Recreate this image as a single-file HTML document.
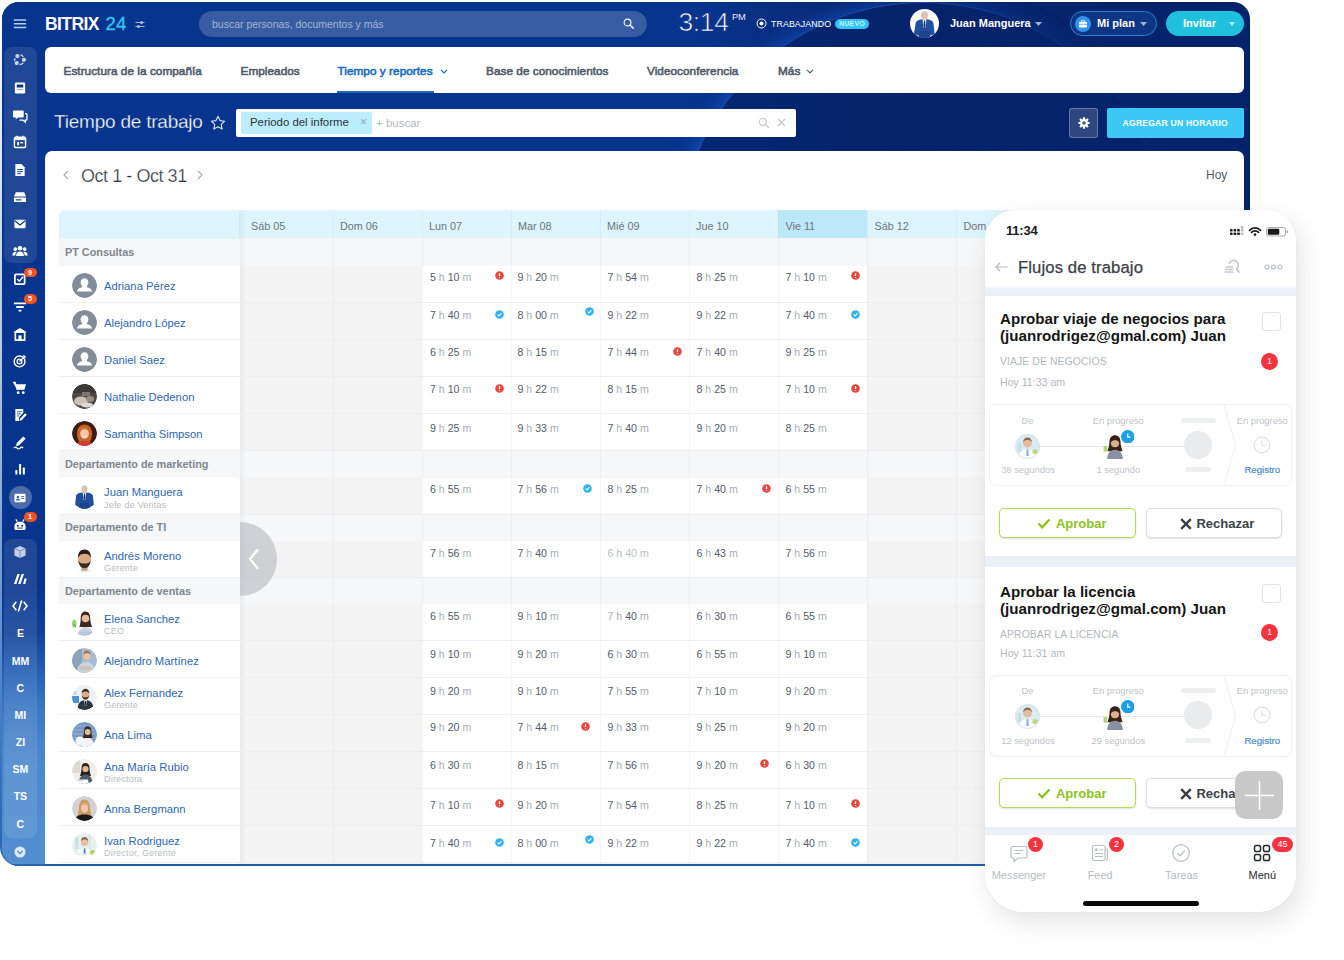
<!DOCTYPE html>
<html lang="es">
<head>
<meta charset="utf-8">
<title>Bitrix24 - Tiempo de trabajo</title>
<style>
*{box-sizing:border-box;margin:0;padding:0}
html,body{width:1344px;height:960px;background:#fff;overflow:hidden;font-family:"Liberation Sans",sans-serif;}
.abs{position:absolute}
#edge{position:absolute;left:0;top:0;width:80px;height:866px;border-radius:19px 0 0 19px;background:linear-gradient(180deg,#fff 0,#f2f6fb 60px,#e6eef8 110px,#a8c0e0 400px,#5a8bc8 650px,#2f6db8 800px,#2a66b5 866px)}
#win{position:absolute;left:0;top:0;width:1250px;height:866px;clip-path:inset(2px 0 0 2px round 17px 17px 0 17px);overflow:hidden;
 background:linear-gradient(90deg,#07348c 0%,#07348c 56%,#06266f 71%,#05236a 100%);}
#win .arcw{position:absolute;left:617.5px;top:-58.1px;width:640px;height:620px;-webkit-mask-image:linear-gradient(90deg,#000 0%,#000 42%,rgba(0,0,0,.12) 75%,rgba(0,0,0,.1) 100%);mask-image:linear-gradient(90deg,#000 0%,#000 42%,rgba(0,0,0,.12) 75%,rgba(0,0,0,.1) 100%)}
#win .arc{position:absolute;left:60px;top:60px;width:490px;height:490px;border-radius:50%;border:1.5px solid rgba(50,120,235,.5);background:rgba(6,34,106,.72);box-shadow:-3px -2px 20px rgba(30,100,225,.5)}
/* sidebar */
#side{position:absolute;left:2px;top:0;width:43px;height:866px;background:linear-gradient(180deg,#07348c 0%,#07348c 68%,#0f4097 73%,#1d54aa 76%,#2d69bb 79.5%,#3d79c4 82.5%,#4783ca 85.7%,#4d89cd 89%,#528ed0 100%);padding-left:3px;border-bottom:2px solid #2a66b5}
#side .grp{position:absolute;left:2px;width:33px;border-radius:8px;background:rgba(255,255,255,.10)}
#side .ic{position:absolute;left:8.4px;width:20px;height:20px;transform:scale(.93)}
#side .tx{position:absolute;left:0.4px;width:36px;text-align:center;color:#fff;font-weight:bold;font-size:10.5px;line-height:12px}
#side .bdg{position:absolute;left:21.7px;width:13px;height:9.6px;border-radius:4.8px;background:#f4511e;color:#fff;font-size:7.5px;font-weight:bold;text-align:center;line-height:9.8px}
/* top bar */
#top{position:absolute;left:0;top:0;width:1250px;height:47px;color:#fff}
.nav{position:absolute;left:45px;top:47px;width:1199px;height:46px;background:#fff;border-radius:6px}
.nav span{position:absolute;top:16.5px;font-size:11.75px;-webkit-text-stroke:.6px;letter-spacing:.05px;color:#525c69;white-space:nowrap;line-height:14px}
.card{position:absolute;left:45px;top:151px;width:1199px;height:720px;background:#fff;border-radius:7px 7px 0 0}
/* table */
.hd{position:absolute;top:210px;height:28.5px;background:#dff5fd}
.hd span,.hl{position:absolute;top:220px;font-size:10.8px;color:#6b7480;line-height:13px;white-space:nowrap}
.gr{position:absolute;left:59px;width:181px;height:26.4px;background:#f5f7f8;font-size:10.85px;font-weight:bold;color:#80868e;padding:6.7px 0 0 6px;line-height:13px;white-space:nowrap}
.pr{position:absolute;left:59px;width:181px;height:37px;background:#fff;border-bottom:1px solid #eef0f2}
.pr .av{position:absolute;left:12.5px;top:6.9px;width:25px;height:25px;border-radius:50%;overflow:hidden}
.pr .nm{position:absolute;left:45px;font-size:11.3px;color:#2f67b3;line-height:13px;white-space:nowrap}
.pr .sb{position:absolute;left:45px;top:22px;font-size:9px;color:#b9bdc2;line-height:10px;white-space:nowrap;letter-spacing:.2px}
.tc{position:absolute;font-size:10.6px;color:#535c69;line-height:12px;white-space:nowrap;word-spacing:0px}
.tc i{font-style:normal;color:#a8adb4}
.tc.f,.tc.f i{color:#b9bec4}
.er,.ok{position:absolute;width:8px;height:8px;border-radius:50%}
.er{background:#e5483f}
.ok{background:#2fb4ee}
/* phone */
#ph{position:absolute;left:985.4px;top:210.4px;width:310.5px;height:701.5px;border-radius:30px 30px 38px 38px;background:#fff;box-shadow:5px 10px 26px rgba(0,0,0,.11),0 0 3px rgba(0,0,0,.04);overflow:hidden}
#ph .band{position:absolute;left:0;width:311px;background:#ebf1f6}
#ph .ttl{position:absolute;left:14.6px;font-size:15.15px;font-weight:bold;color:#151515;line-height:17px;white-space:nowrap}
#ph .cap{position:absolute;left:14.6px;font-size:9.5px;color:#b3b8bd;line-height:12px;white-space:nowrap}
#ph .chk{position:absolute;left:276.3px;width:19px;height:19px;border:1px solid #dfe3e6;border-radius:3px;background:#fff}
#ph .rb{position:absolute;left:275.7px;width:17px;height:17px;border-radius:50%;background:#f5333f;color:#fff;font-size:8.5px;text-align:center;line-height:17px}
#ph .pbox{position:absolute;left:3.6px;width:303px;height:82px;border:1px solid #eff1f3;border-radius:7px}
#ph .sm{position:absolute;font-size:9.4px;color:#c0c4c9;line-height:10px;white-space:nowrap;text-align:center;transform:translateX(-50%)}
#ph .btn{position:absolute;height:30px;border-radius:5px;font-size:12.5px;font-weight:bold;line-height:28px;text-align:center;background:#fff;box-shadow:0 1px 2px rgba(0,0,0,.12)}
#ph .tab{position:absolute;font-size:11px;color:#b7bcc1;line-height:12px;transform:translateX(-50%);white-space:nowrap}
#ph .tb{position:absolute;height:14.5px;border-radius:7.5px;background:#f5333f;color:#fff;font-size:9px;text-align:center;line-height:14.5px}
</style>
</head>
<body>
<div id="edge"></div>
<div id="win">
<div class="arcw"><div class="arc"></div></div>
<div id="side">
<div class="grp" style="top:47px;height:216px"></div>
<div class="grp" style="top:539px;height:299px"></div>
<svg class="ic" style="top:50.4px;opacity:1" viewBox="0 0 20 20"><g fill="#c9d3ea"><circle cx="7.200" cy="5.800" r="2.300"/><circle cx="14.200" cy="9.800" r="2.300"/><circle cx="6.500" cy="13.300" r="2.300"/></g><path d="M10.500 4.300a6 6 0 0 1 3 2.400M13.500 13a6 6 0 0 1-4 2M4.300 11a6 6 0 0 1 .3-3" fill="none" stroke="#c9d3ea" stroke-width="1.500"/></svg>
<svg class="ic" style="top:77.5px;opacity:1" viewBox="0 0 20 20"><rect x="4.500" y="4" width="11" height="12" rx="1.500" fill="#fff"/><rect x="6.500" y="6.300" width="7" height="3.200" fill="#07348c"/><rect x="6.500" y="11" width="7" height="1" fill="#07348c" opacity=".5"/></svg>
<svg class="ic" style="top:105.5px;opacity:1" viewBox="0 0 20 20"><path d="M3.500 4h9.500a1 1 0 0 1 1 1v5.500a1 1 0 0 1-1 1H8l-2.500 2v-2H3.500a1 1 0 0 1-1-1V5a1 1 0 0 1 1-1z" fill="#fff"/><path d="M15.500 7.500h1a1 1 0 0 1 1 1v5a1 1 0 0 1-1 1h-.8v2l-2.400-2H9.500" fill="none" stroke="#fff" stroke-width="1.400"/></svg>
<svg class="ic" style="top:132px;opacity:1" viewBox="0 0 20 20"><rect x="4" y="5" width="12" height="11" rx="1.300" fill="none" stroke="#fff" stroke-width="1.600"/><rect x="4" y="5" width="12" height="3" fill="#fff"/><path d="M7 3.300v2.500M13 3.300v2.500" stroke="#fff" stroke-width="1.500"/><rect x="7" y="10" width="2" height="3.500" fill="#fff"/><rect x="10.300" y="10" width="3" height="1.500" fill="#fff"/></svg>
<svg class="ic" style="top:159.5px;opacity:1" viewBox="0 0 20 20"><path d="M5 3.500h6.500l3.500 3.500v9.500H5z" fill="#fff"/><path d="M7 9.500h6M7 11.800h6M7 14h4" stroke="#07348c" stroke-width="1"/></svg>
<svg class="ic" style="top:187px;opacity:1" viewBox="0 0 20 20"><path d="M5.500 5h9l2 4.500h-13z" fill="#fff"/><rect x="3.500" y="10.500" width="13" height="5" rx="1" fill="#fff"/><rect x="5.500" y="12.500" width="6" height="1.200" fill="#07348c"/></svg>
<svg class="ic" style="top:214px;opacity:1" viewBox="0 0 20 20"><rect x="4" y="5.500" width="12" height="9" rx="1.200" fill="#fff"/><path d="M4.500 6.500l5.500 4.500 5.500-4.500" fill="none" stroke="#07348c" stroke-width="1.300"/></svg>
<svg class="ic" style="top:241px;opacity:1" viewBox="0 0 20 20"><circle cx="10" cy="7" r="2.500" fill="#fff"/><path d="M5.800 15.500c0-3 1.700-5 4.200-5s4.200 2 4.200 5z" fill="#fff"/><circle cx="5" cy="8" r="1.900" fill="#fff"/><path d="M1.800 14.800c0-2.500 1.200-4 3.200-4 .6 0 1.100.1 1.500.4-1 1-1.500 2.200-1.600 3.600z" fill="#fff"/><circle cx="15" cy="8" r="1.900" fill="#fff"/><path d="M18.200 14.800c0-2.500-1.200-4-3.200-4-.6 0-1.100.1-1.500.4 1 1 1.500 2.200 1.600 3.600z" fill="#fff"/></svg>
<svg class="ic" style="top:268.8px;opacity:1" viewBox="0 0 20 20"><rect x="4.500" y="5" width="10.500" height="10.500" rx="1.300" fill="none" stroke="#fff" stroke-width="1.900"/><path d="M7 10l2.300 2.300 4-4.600" fill="none" stroke="#fff" stroke-width="1.600"/></svg>
<svg class="ic" style="top:297.3px;opacity:1" viewBox="0 0 20 20"><path d="M3.500 6h13M6 10h8M8.500 14h3" stroke="#fff" stroke-width="1.900"/></svg>
<svg class="ic" style="top:324px;opacity:1" viewBox="0 0 20 20"><path d="M10 3.500l6.500 4v1.500h-13V7.500z" fill="#fff"/><path d="M5 9v7.500h10V9" fill="none" stroke="#fff" stroke-width="1.800"/><rect x="8.300" y="11.500" width="3.400" height="5" fill="#fff"/></svg>
<svg class="ic" style="top:351px;opacity:1" viewBox="0 0 20 20"><circle cx="9.500" cy="10.500" r="5.800" fill="none" stroke="#fff" stroke-width="1.500"/><circle cx="9.500" cy="10.500" r="2.600" fill="none" stroke="#fff" stroke-width="1.400"/><path d="M9.500 10.500l6-6" stroke="#fff" stroke-width="1.500"/><path d="M14 3.500l.5 2 2 .5" fill="none" stroke="#fff" stroke-width="1.100"/></svg>
<svg class="ic" style="top:377.5px;opacity:1" viewBox="0 0 20 20"><path d="M2.500 4h2.300l.7 2h11l-1.800 6H7z" fill="#fff"/><path d="M2.500 4h2.300l2.200 8" fill="none" stroke="#fff" stroke-width="1.300"/><circle cx="8" cy="15" r="1.500" fill="#fff"/><circle cx="13.500" cy="15" r="1.500" fill="#fff"/></svg>
<svg class="ic" style="top:404.7px;opacity:1" viewBox="0 0 20 20"><path d="M5 3.500h8.500v4l-4.500 5v4H5z" fill="#fff"/><path d="M6.800 6.500h5M6.800 8.800h4M6.800 11h2" stroke="#07348c" stroke-width=".9"/><path d="M15.500 8l1.800 1.600-5.500 6-2.300.8.500-2.400z" fill="#fff"/></svg>
<svg class="ic" style="top:432px;opacity:1" viewBox="0 0 20 20"><path d="M13.500 4l2.500 2.500-7 7-3.300 1 .8-3.500z" fill="#fff"/><path d="M3.500 16.500c1.200-1.200 2.200-1.200 3.300 0s2.200 1.200 3.300 0 2.200-1.200 3.300 0" fill="none" stroke="#fff" stroke-width="1.300"/></svg>
<svg class="ic" style="top:459.4px;opacity:1" viewBox="0 0 20 20"><rect x="5" y="11" width="2.200" height="5" rx=".6" fill="#fff"/><rect x="9" y="4.500" width="2.200" height="11.500" rx=".6" fill="#fff"/><rect x="13" y="8.500" width="2.200" height="7.500" rx=".6" fill="#fff"/></svg>
<div class="abs" style="left:7px;top:486px;width:23px;height:23px;border-radius:50%;background:rgba(255,255,255,.28)"></div>
<svg class="ic" style="top:487.5px;opacity:1" viewBox="0 0 20 20"><rect x="4" y="5.500" width="12" height="9" rx="1.200" fill="#fff"/><circle cx="7.800" cy="9" r="1.400" fill="#3c5fae"/><path d="M5.600 12.800c0-1.300.9-2 2.200-2s2.200.7 2.200 2z" fill="#3c5fae"/><path d="M11.300 8.500h3.200M11.300 10.500h3.200" stroke="#3c5fae" stroke-width="1"/></svg>
<svg class="ic" style="top:514.5px;opacity:1" viewBox="0 0 20 20"><path d="M4 11.500c0-3 2.500-5 6-5s6 2 6 5v2.500a1.500 1.500 0 0 1-1.500 1.500h-9A1.500 1.500 0 0 1 4 14z" fill="#fff"/><circle cx="7.600" cy="10.800" r="1.100" fill="#07348c"/><circle cx="12.400" cy="10.800" r="1.100" fill="#07348c"/><path d="M7 13.300h6" stroke="#07348c" stroke-width="1"/><path d="M5.500 4l1.700 2.500M14.500 4l-1.700 2.500" stroke="#fff" stroke-width="1.300"/></svg>
<svg class="ic" style="top:542px;opacity:1" viewBox="0 0 20 20"><path d="M10 3.500l6 2.700v7.600l-6 2.700-6-2.700V6.200z" fill="#c4cfe8"/><path d="M4 6.200l6 2.700 6-2.700M10 8.900v7.600" fill="none" stroke="#5b77b8" stroke-width=".8"/></svg>
<svg class="ic" style="top:569px;opacity:1" viewBox="0 0 20 20"><path d="M3.500 15.500l3.700-11h2.600l-3.700 11zM8 15.500l3.700-11h2.600l-3.700 11zM13.300 15.500l1.500-6h2.400l-1.500 6z" fill="#fff"/></svg>
<svg class="ic" style="top:596px;opacity:1" viewBox="0 0 20 20"><path d="M6 5.500L2.500 10 6 14.500M14 5.500l3.500 4.500-3.500 4.500" fill="none" stroke="#fff" stroke-width="1.700"/><path d="M11.800 4l-3.600 12" stroke="#fff" stroke-width="1.700"/></svg>
<div class="tx" style="top:627px">E</div>
<div class="tx" style="top:654.6px">MM</div>
<div class="tx" style="top:682px">C</div>
<div class="tx" style="top:709px">MI</div>
<div class="tx" style="top:736px">ZI</div>
<div class="tx" style="top:763px">SM</div>
<div class="tx" style="top:790px">TS</div>
<div class="tx" style="top:817.7px">C</div>
<svg class="ic" style="top:841.5px;opacity:1" viewBox="0 0 20 20"><circle cx="10" cy="10" r="6" fill="#dce8f7"/><path d="M7.300 9l2.700 2.700L12.700 9" fill="none" stroke="#4f8fd0" stroke-width="1.500"/></svg>
<div class="bdg" style="top:267.5px">9</div>
<div class="bdg" style="top:294px">5</div>
<div class="bdg" style="top:512px">1</div>
</div>

<div id="top">
<svg class="abs" style="left:13px;top:18px" width="14" height="11" viewBox="0 0 14 11"><path d="M.8 2h12.400M.8 5.700h12.400M.8 9.400h12.400" stroke="#b4cdf7" stroke-width="1.500"/></svg>
<div class="abs" style="left:45px;top:13px;font-size:17.5px;font-weight:bold;line-height:22px;letter-spacing:-.6px;white-space:nowrap">BITRIX <span style="color:#2fc6f6;font-weight:normal;font-size:18.5px;letter-spacing:.2px;margin-left:2.5px;-webkit-text-stroke:.35px #2fc6f6">24</span></div>
<svg class="abs" style="left:135px;top:20px" width="10" height="9" viewBox="0 0 10 9"><path d="M.5 2.500h9M.5 6.500h9" stroke="#a9b8d8" stroke-width="1.100"/><circle cx="6.500" cy="2.500" r="1.600" fill="#a9b8d8"/><circle cx="3.500" cy="6.500" r="1.600" fill="#a9b8d8"/></svg>
<div class="abs" style="left:199px;top:11px;width:448px;height:26px;border-radius:13px;background:rgba(255,255,255,.2)"></div>
<div class="abs" style="left:212px;top:17px;font-size:10.5px;line-height:14px;color:rgba(255,255,255,.55);white-space:nowrap">buscar personas, documentos y más</div>
<svg class="abs" style="left:622px;top:17px" width="13" height="13" viewBox="0 0 13 13"><circle cx="5.500" cy="5.500" r="3.400" fill="none" stroke="#fff" stroke-width="1.100"/><path d="M8 8l3.300 3.300" stroke="#fff" stroke-width="1.400" stroke-linecap="round"/></svg>
<div class="abs" style="left:678.500px;top:6px;font-size:26.5px;line-height:32px;letter-spacing:-.4px;color:#fff;-webkit-text-stroke:.7px #07348c;white-space:nowrap">3:14</div>
<div class="abs" style="left:732px;top:11.500px;font-size:9.300px;line-height:10px;color:#e8eefb;letter-spacing:-.3px">PM</div>
<svg class="abs" style="left:756px;top:18px" width="11" height="11" viewBox="0 0 11 11"><circle cx="5.500" cy="5.500" r="4.500" fill="none" stroke="#fff" stroke-width="1"/><circle cx="5.500" cy="5.500" r="2" fill="#fff"/></svg>
<div class="abs" style="left:771px;top:18px;font-size:8.800px;line-height:12px;color:#fff;white-space:nowrap;letter-spacing:.1px">TRABAJANDO</div>
<div class="abs" style="left:835px;top:19px;width:34px;height:9.500px;border-radius:5px;background:#2fc6f6;color:#cdeeff;font-size:7px;font-weight:bold;line-height:9.500px;text-align:center;letter-spacing:.2px">NUEVO</div>
<!-- avatar -->
<svg class="abs" style="left:909.500px;top:8.500px" width="29" height="29" viewBox="0 0 29 29"><defs><clipPath id="avc"><circle cx="14.500" cy="14.500" r="14.500"/></clipPath></defs><g clip-path="url(#avc)"><rect width="29" height="29" fill="#fdfdfe"/><path d="M5.500 15c0-3 3-4.700 9-4.700s9 1.700 9 4.700l1.200 10.500-4.700 1-.5 2.500H9l-.5-2.500-4.700-1z" fill="#1f4f9e"/><path d="M12.600 10.300h3.800l-.6 8h-2.600z" fill="#eef2f8"/><path d="M14 11.500h1l.6 5.500-1.100 1.400-1.100-1.400z" fill="#12336f"/><circle cx="14.500" cy="6.600" r="3.500" fill="#e6bfa2"/><path d="M11 5.800c0-2.500 1.500-3.900 3.500-3.900s3.500 1.400 3.500 3.900c-.9-1.200-2.100-1.700-3.500-1.700s-2.600.5-3.500 1.700z" fill="#c9c9cc"/><path d="M10 22l-1.500 7h5l1-6 1 6h5L19 22z" fill="#1a4389"/></g></svg>
<div class="abs" style="left:950px;top:17px;font-size:11px;font-weight:bold;line-height:13px;white-space:nowrap">Juan Manguera</div>
<svg class="abs" style="left:1035px;top:22px" width="7" height="4" viewBox="0 0 7 4"><path d="M0 0h7L3.500 4z" fill="#9fb2d8"/></svg>
<div class="abs" style="left:1069.500px;top:11px;width:87px;height:25px;border-radius:13px;border:1px solid #2a80cf;background:rgba(30,90,180,.35)"></div>
<svg class="abs" style="left:1074.500px;top:15.500px" width="16" height="16" viewBox="0 0 16 16"><circle cx="8" cy="8" r="8" fill="#3392ea"/><rect x="4" y="6" width="8" height="5.500" rx=".8" fill="#fff"/><path d="M6.300 6V4.800h3.400V6" fill="none" stroke="#fff" stroke-width="1"/><path d="M4 8.300h8" stroke="#3392ea" stroke-width=".7"/></svg>
<div class="abs" style="left:1097px;top:17px;font-size:11px;font-weight:bold;line-height:13px;white-space:nowrap">Mi plan</div>
<svg class="abs" style="left:1140px;top:22px" width="7" height="4" viewBox="0 0 7 4"><path d="M0 0h7L3.500 4z" fill="#9fb2d8"/></svg>
<div class="abs" style="left:1165.500px;top:11px;width:78px;height:25px;border-radius:13px;background:#1fc0dd"></div>
<div class="abs" style="left:1183px;top:17px;font-size:11px;font-weight:bold;line-height:13px;white-space:nowrap">Invitar</div>
<svg class="abs" style="left:1228.500px;top:22px" width="6" height="4" viewBox="0 0 6 4"><path d="M0 0h6L3 4z" fill="#b9ecf6"/></svg>
</div>

<div class="nav">
<span style="left:18.500px">Estructura de la compañía</span>
<span style="left:195.500px">Empleados</span>
<span style="left:292.500px;color:#1a6bc0">Tiempo y reportes</span>
<svg class="abs" style="left:395px;top:22px" width="8" height="5" viewBox="0 0 8 5"><path d="M1 .8l3 3 3-3" fill="none" stroke="#1a6bc0" stroke-width="1.200"/></svg>
<div class="abs" style="left:292px;top:43.500px;width:97px;height:2.500px;background:#1f66b3"></div>
<span style="left:441px">Base de conocimientos</span>
<span style="left:602px">Videoconferencia</span>
<span style="left:733px">Más</span>
<svg class="abs" style="left:760.500px;top:22px" width="8" height="5" viewBox="0 0 8 5"><path d="M1 .8l3 3 3-3" fill="none" stroke="#525c69" stroke-width="1.200"/></svg>
</div>

<div class="abs" style="left:54px;top:110px;font-size:19px;line-height:24px;color:#fff;white-space:nowrap;letter-spacing:-.22px;-webkit-text-stroke:.3px #07348c">Tiempo de trabajo</div>
<svg class="abs" style="left:209.500px;top:114.500px" width="16" height="15" viewBox="0 0 16 15"><path d="M8 1.300l2 4.300 4.700.6-3.450 3.250.9 4.650L8 11.800l-4.150 2.300.9-4.650L1.300 6.200 6 5.600z" fill="none" stroke="#dfe7f6" stroke-width="1.100" stroke-linejoin="round"/></svg>
<div class="abs" style="left:236px;top:108.500px;width:559.500px;height:28.500px;border-radius:2px;background:#fff"></div>
<div class="abs" style="left:240.500px;top:111.500px;width:131px;height:22.500px;border-radius:2px;background:#bcedfc"></div>
<div class="abs" style="left:250px;top:116px;font-size:11.400px;line-height:13px;color:#2a3138;white-space:nowrap">Periodo del informe</div>
<div class="abs" style="left:360px;top:115px;font-size:12px;line-height:14px;color:#8fa9b5">×</div>
<div class="abs" style="left:376px;top:116px;font-size:11.500px;line-height:14px;color:#b4b9be;white-space:nowrap">+ buscar</div>
<svg class="abs" style="left:758px;top:116.500px" width="12" height="12" viewBox="0 0 12 12"><circle cx="4.800" cy="4.800" r="3.500" fill="none" stroke="#c3c7cb" stroke-width="1.100"/><path d="M7.400 7.400l3.400 3.400" stroke="#c3c7cb" stroke-width="1.300"/></svg>
<svg class="abs" style="left:777px;top:118px" width="9" height="9" viewBox="0 0 9 9"><path d="M1 1l7 7M8 1L1 8" stroke="#c3c7cb" stroke-width="1.100"/></svg>
<div class="abs" style="left:1068.500px;top:107.500px;width:29.500px;height:30px;border-radius:3px;background:rgba(255,255,255,.16);border:1px solid rgba(255,255,255,.28)"></div>
<svg class="abs" style="left:1077.500px;top:116.500px" width="12" height="12" viewBox="0 0 14 14"><g fill="#fff"><circle cx="7" cy="7" r="4.500"/><rect x="5.700" y=".4" width="2.600" height="13.200" rx=".5"/><rect x="5.700" y=".4" width="2.600" height="13.200" rx=".5" transform="rotate(45 7 7)"/><rect x="5.700" y=".4" width="2.600" height="13.200" rx=".5" transform="rotate(90 7 7)"/><rect x="5.700" y=".4" width="2.600" height="13.200" rx=".5" transform="rotate(135 7 7)"/></g><circle cx="7" cy="7" r="2.100" fill="#3a5aa0"/></svg>
<div class="abs" style="left:1107px;top:107.500px;width:136.500px;height:30px;border-radius:2px;background:#3bc8f5;color:#fff;font-size:8.600px;font-weight:bold;line-height:30px;text-align:center;letter-spacing:.2px;white-space:nowrap">AGREGAR UN HORARIO</div>

<div class="card"></div>
<svg class="abs" style="left:62px;top:169px" width="8" height="12" viewBox="0 0 8 12"><path d="M6 2 2 6l4 4" fill="none" stroke="#a5abb2" stroke-width="1.100"/></svg>
<div class="abs" style="left:81px;top:165px;font-size:18px;color:#30363e;line-height:22px;white-space:nowrap;letter-spacing:-.45px;-webkit-text-stroke:.25px #fff">Oct 1 - Oct 31</div>
<svg class="abs" style="left:196px;top:169px" width="8" height="12" viewBox="0 0 8 12"><path d="M2 2l4 4-4 4" fill="none" stroke="#a5abb2" stroke-width="1.100"/></svg>
<div class="abs" style="left:1206px;top:168px;font-size:12px;color:#535c69;line-height:14px">Hoy</div>
<div class="hd" style="left:59px;width:1185px;border-radius:6px 0 0 0"></div>
<div class="hd" style="left:778px;width:89px;background:#bde8f8"></div>
<div class="abs" style="left:239px;top:238px;width:1005px;height:628px;background:#f4f4f5"></div>
<div class="abs" style="left:239px;top:238.5px;width:1005px;height:27.6px;background:#f6f7f8"></div>
<div class="abs" style="left:239px;top:451.1px;width:1005px;height:26.4px;background:#f6f7f8"></div>
<div class="abs" style="left:239px;top:514.5px;width:1005px;height:26.4px;background:#f6f7f8"></div>
<div class="abs" style="left:239px;top:577.9px;width:1005px;height:26.4px;background:#f6f7f8"></div>
<div class="abs" style="left:422px;top:266.1px;width:445px;height:37px;background:#fff;border-bottom:1px solid #eceef0"></div>
<div class="abs" style="left:422px;top:303.1px;width:445px;height:37px;background:#fff;border-bottom:1px solid #eceef0"></div>
<div class="abs" style="left:422px;top:340.1px;width:445px;height:37px;background:#fff;border-bottom:1px solid #eceef0"></div>
<div class="abs" style="left:422px;top:377.1px;width:445px;height:37px;background:#fff;border-bottom:1px solid #eceef0"></div>
<div class="abs" style="left:422px;top:414.1px;width:445px;height:37px;background:#fff;border-bottom:1px solid #eceef0"></div>
<div class="abs" style="left:422px;top:477.5px;width:445px;height:37px;background:#fff;border-bottom:1px solid #eceef0"></div>
<div class="abs" style="left:422px;top:540.9px;width:445px;height:37px;background:#fff;border-bottom:1px solid #eceef0"></div>
<div class="abs" style="left:422px;top:604.3px;width:445px;height:37px;background:#fff;border-bottom:1px solid #eceef0"></div>
<div class="abs" style="left:422px;top:641.3px;width:445px;height:37px;background:#fff;border-bottom:1px solid #eceef0"></div>
<div class="abs" style="left:422px;top:678.3px;width:445px;height:37px;background:#fff;border-bottom:1px solid #eceef0"></div>
<div class="abs" style="left:422px;top:715.3px;width:445px;height:37px;background:#fff;border-bottom:1px solid #eceef0"></div>
<div class="abs" style="left:422px;top:752.3px;width:445px;height:37px;background:#fff;border-bottom:1px solid #eceef0"></div>
<div class="abs" style="left:422px;top:789.3px;width:445px;height:37px;background:#fff;border-bottom:1px solid #eceef0"></div>
<div class="abs" style="left:422px;top:826.3px;width:445px;height:37px;background:#fff;border-bottom:1px solid #eceef0"></div>
<div class="abs" style="left:333px;top:211px;width:1px;height:655px;background:rgba(120,140,160,.08)"></div>
<div class="abs" style="left:422px;top:211px;width:1px;height:655px;background:rgba(120,140,160,.08)"></div>
<div class="abs" style="left:511px;top:211px;width:1px;height:655px;background:rgba(120,140,160,.08)"></div>
<div class="abs" style="left:600px;top:211px;width:1px;height:655px;background:rgba(120,140,160,.08)"></div>
<div class="abs" style="left:689px;top:211px;width:1px;height:655px;background:rgba(120,140,160,.08)"></div>
<div class="abs" style="left:778px;top:211px;width:1px;height:655px;background:rgba(120,140,160,.08)"></div>
<div class="abs" style="left:867px;top:211px;width:1px;height:655px;background:rgba(120,140,160,.08)"></div>
<div class="abs" style="left:956px;top:211px;width:1px;height:655px;background:rgba(120,140,160,.08)"></div>
<div class="abs" style="left:1045px;top:211px;width:1px;height:655px;background:rgba(120,140,160,.08)"></div>
<div class="abs" style="left:1134px;top:211px;width:1px;height:655px;background:rgba(120,140,160,.08)"></div>
<div class="abs" style="left:1223px;top:211px;width:1px;height:655px;background:rgba(120,140,160,.08)"></div>
<div class="abs" style="left:244px;top:302.1px;width:178px;height:1px;background:#eceeef"></div>
<div class="abs" style="left:867px;top:302.1px;width:377px;height:1px;background:#eceeef"></div>
<div class="abs" style="left:244px;top:339.1px;width:178px;height:1px;background:#eceeef"></div>
<div class="abs" style="left:867px;top:339.1px;width:377px;height:1px;background:#eceeef"></div>
<div class="abs" style="left:244px;top:376.1px;width:178px;height:1px;background:#eceeef"></div>
<div class="abs" style="left:867px;top:376.1px;width:377px;height:1px;background:#eceeef"></div>
<div class="abs" style="left:244px;top:413.1px;width:178px;height:1px;background:#eceeef"></div>
<div class="abs" style="left:867px;top:413.1px;width:377px;height:1px;background:#eceeef"></div>
<div class="abs" style="left:244px;top:450.1px;width:178px;height:1px;background:#eceeef"></div>
<div class="abs" style="left:867px;top:450.1px;width:377px;height:1px;background:#eceeef"></div>
<div class="abs" style="left:244px;top:513.5px;width:178px;height:1px;background:#eceeef"></div>
<div class="abs" style="left:867px;top:513.5px;width:377px;height:1px;background:#eceeef"></div>
<div class="abs" style="left:244px;top:576.9px;width:178px;height:1px;background:#eceeef"></div>
<div class="abs" style="left:867px;top:576.9px;width:377px;height:1px;background:#eceeef"></div>
<div class="abs" style="left:244px;top:640.3px;width:178px;height:1px;background:#eceeef"></div>
<div class="abs" style="left:867px;top:640.3px;width:377px;height:1px;background:#eceeef"></div>
<div class="abs" style="left:244px;top:677.3px;width:178px;height:1px;background:#eceeef"></div>
<div class="abs" style="left:867px;top:677.3px;width:377px;height:1px;background:#eceeef"></div>
<div class="abs" style="left:244px;top:714.3px;width:178px;height:1px;background:#eceeef"></div>
<div class="abs" style="left:867px;top:714.3px;width:377px;height:1px;background:#eceeef"></div>
<div class="abs" style="left:244px;top:751.3px;width:178px;height:1px;background:#eceeef"></div>
<div class="abs" style="left:867px;top:751.3px;width:377px;height:1px;background:#eceeef"></div>
<div class="abs" style="left:244px;top:788.3px;width:178px;height:1px;background:#eceeef"></div>
<div class="abs" style="left:867px;top:788.3px;width:377px;height:1px;background:#eceeef"></div>
<div class="abs" style="left:244px;top:825.3px;width:178px;height:1px;background:#eceeef"></div>
<div class="abs" style="left:867px;top:825.3px;width:377px;height:1px;background:#eceeef"></div>
<div class="abs" style="left:244px;top:862.3px;width:178px;height:1px;background:#eceeef"></div>
<div class="abs" style="left:867px;top:862.3px;width:377px;height:1px;background:#eceeef"></div>
<div class="abs" style="left:239px;top:211px;width:7px;height:655px;background:linear-gradient(90deg,rgba(110,125,140,.10),rgba(110,125,140,0))"></div>
<div class="hl" style="left:251px">Sáb 05</div>
<div class="hl" style="left:340px">Dom 06</div>
<div class="hl" style="left:429px">Lun 07</div>
<div class="hl" style="left:518px">Mar 08</div>
<div class="hl" style="left:607px">Mié 09</div>
<div class="hl" style="left:696px">Jue 10</div>
<div class="hl" style="left:785.5px">Vie 11</div>
<div class="hl" style="left:874.5px">Sáb 12</div>
<div class="hl" style="left:963.5px">Dom 13</div>
<div class="gr" style="top:238.5px;height:27.6px;padding-top:7.7px">PT Consultas</div>
<div class="pr" style="top:266.1px"><div class="av"><svg viewBox="0 0 25 25" width="25" height="25"><circle cx="12.500" cy="12.500" r="12.500" fill="#838c97"/><path d="M12.500 5.200c2.300 0 3.900 1.700 3.900 4 0 1.500-.6 2.900-1.500 3.700v1.300c2.600.6 4.600 1.600 5.200 4.300H4.900c.6-2.700 2.600-3.700 5.200-4.300v-1.300c-.9-.8-1.500-2.200-1.500-3.700 0-2.300 1.600-4 3.900-4z" fill="#fff"/></svg></div><div class="nm" style="top:14.1px">Adriana Pérez</div></div>
<div class="tc" style="left:430px;top:271.2px">5 <i>h</i> 10 <i>m</i></div>
<svg class="abs" style="left:494.5px;top:270.5px" width="9" height="9" viewBox="0 0 9 9"><circle cx="4.500" cy="4.500" r="4.300" fill="#e5483f"/><path d="M4.500 2.200v2.800M4.500 6.200v.9" stroke="#fff" stroke-width="1.300"/></svg>
<div class="tc" style="left:517.5px;top:271.2px">9 <i>h</i> 20 <i>m</i></div>
<div class="tc" style="left:607.5px;top:271.2px">7 <i>h</i> 54 <i>m</i></div>
<div class="tc" style="left:696.5px;top:271.2px">8 <i>h</i> 25 <i>m</i></div>
<div class="tc" style="left:785.5px;top:271.2px">7 <i>h</i> 10 <i>m</i></div>
<svg class="abs" style="left:850.5px;top:270.5px" width="9" height="9" viewBox="0 0 9 9"><circle cx="4.500" cy="4.500" r="4.300" fill="#e5483f"/><path d="M4.500 2.200v2.800M4.500 6.200v.9" stroke="#fff" stroke-width="1.300"/></svg>
<div class="pr" style="top:303.1px"><div class="av"><svg viewBox="0 0 25 25" width="25" height="25"><circle cx="12.500" cy="12.500" r="12.500" fill="#838c97"/><path d="M12.500 5.200c2.300 0 3.900 1.700 3.900 4 0 1.500-.6 2.900-1.500 3.700v1.300c2.600.6 4.600 1.600 5.200 4.300H4.900c.6-2.700 2.600-3.700 5.200-4.300v-1.300c-.9-.8-1.500-2.200-1.500-3.700 0-2.300 1.600-4 3.900-4z" fill="#fff"/></svg></div><div class="nm" style="top:14.1px">Alejandro López</div></div>
<div class="tc" style="left:430px;top:309.2px">7 <i>h</i> 40 <i>m</i></div>
<svg class="abs" style="left:494.5px;top:309.5px" width="9" height="9" viewBox="0 0 9 9"><circle cx="4.500" cy="4.500" r="4.300" fill="#2fb4ee"/><path d="M2.600 4.600l1.400 1.400 2.500-2.800" stroke="#fff" stroke-width="1.100" fill="none"/></svg>
<div class="tc" style="left:517.5px;top:309.2px">8 <i>h</i> 00 <i>m</i></div>
<svg class="abs" style="left:584.5px;top:307.0px" width="9" height="9" viewBox="0 0 9 9"><circle cx="4.500" cy="4.500" r="4.300" fill="#2fb4ee"/><path d="M2.600 4.600l1.400 1.400 2.500-2.800" stroke="#fff" stroke-width="1.100" fill="none"/></svg>
<div class="tc" style="left:607.5px;top:309.2px">9 <i>h</i> 22 <i>m</i></div>
<div class="tc" style="left:696.5px;top:309.2px">9 <i>h</i> 22 <i>m</i></div>
<div class="tc" style="left:785.5px;top:309.2px">7 <i>h</i> 40 <i>m</i></div>
<svg class="abs" style="left:850.5px;top:309.5px" width="9" height="9" viewBox="0 0 9 9"><circle cx="4.500" cy="4.500" r="4.300" fill="#2fb4ee"/><path d="M2.600 4.600l1.400 1.400 2.500-2.800" stroke="#fff" stroke-width="1.100" fill="none"/></svg>
<div class="pr" style="top:340.1px"><div class="av"><svg viewBox="0 0 25 25" width="25" height="25"><circle cx="12.500" cy="12.500" r="12.500" fill="#838c97"/><path d="M12.500 5.200c2.300 0 3.900 1.700 3.900 4 0 1.500-.6 2.900-1.500 3.700v1.300c2.600.6 4.600 1.600 5.200 4.300H4.900c.6-2.700 2.600-3.700 5.200-4.300v-1.300c-.9-.8-1.500-2.200-1.500-3.700 0-2.300 1.600-4 3.900-4z" fill="#fff"/></svg></div><div class="nm" style="top:14.1px">Daniel Saez</div></div>
<div class="tc" style="left:430px;top:346.2px">6 <i>h</i> 25 <i>m</i></div>
<div class="tc" style="left:517.5px;top:346.2px">8 <i>h</i> 15 <i>m</i></div>
<div class="tc" style="left:607.5px;top:346.2px">7 <i>h</i> 44 <i>m</i></div>
<svg class="abs" style="left:673.2px;top:346.5px" width="9" height="9" viewBox="0 0 9 9"><circle cx="4.500" cy="4.500" r="4.300" fill="#e5483f"/><path d="M4.500 2.200v2.800M4.500 6.200v.9" stroke="#fff" stroke-width="1.300"/></svg>
<div class="tc" style="left:696.5px;top:346.2px">7 <i>h</i> 40 <i>m</i></div>
<div class="tc" style="left:785.5px;top:346.2px">9 <i>h</i> 25 <i>m</i></div>
<div class="pr" style="top:377.1px"><div class="av"><svg viewBox="0 0 25 25" width="25" height="25"><defs><clipPath id="c1"><circle cx="12.500" cy="12.500" r="12.500"/></clipPath></defs><g clip-path="url(#c1)"><rect width="25" height="25" fill="#4f4a45"/><rect x="0" y="0" width="25" height="9" fill="#3c3936"/><ellipse cx="9" cy="17" rx="7" ry="4.500" fill="#c9c2b6"/><ellipse cx="18" cy="15" rx="4" ry="3" fill="#9a9186"/><rect x="10" y="8" width="8" height="4" fill="#7d766d"/><ellipse cx="15" cy="21" rx="6" ry="2.500" fill="#e0dbd2"/></g></svg></div><div class="nm" style="top:14.1px">Nathalie Dedenon</div></div>
<div class="tc" style="left:430px;top:383.2px">7 <i>h</i> 10 <i>m</i></div>
<svg class="abs" style="left:494.5px;top:383.5px" width="9" height="9" viewBox="0 0 9 9"><circle cx="4.500" cy="4.500" r="4.300" fill="#e5483f"/><path d="M4.500 2.200v2.800M4.500 6.200v.9" stroke="#fff" stroke-width="1.300"/></svg>
<div class="tc" style="left:517.5px;top:383.2px">9 <i>h</i> 22 <i>m</i></div>
<div class="tc" style="left:607.5px;top:383.2px">8 <i>h</i> 15 <i>m</i></div>
<div class="tc" style="left:696.5px;top:383.2px">8 <i>h</i> 25 <i>m</i></div>
<div class="tc" style="left:785.5px;top:383.2px">7 <i>h</i> 10 <i>m</i></div>
<svg class="abs" style="left:850.5px;top:383.5px" width="9" height="9" viewBox="0 0 9 9"><circle cx="4.500" cy="4.500" r="4.300" fill="#e5483f"/><path d="M4.500 2.200v2.800M4.500 6.200v.9" stroke="#fff" stroke-width="1.300"/></svg>
<div class="pr" style="top:414.1px"><div class="av"><svg viewBox="0 0 25 25" width="25" height="25"><defs><clipPath id="c2"><circle cx="12.500" cy="12.500" r="12.500"/></clipPath></defs><g clip-path="url(#c2)"><rect width="25" height="25" fill="#3a1f14"/><path d="M5 13c0-6 3-9.500 7.500-9.500S20 7 20 13c0 4-1.500 7-3 9H8c-1.500-2-3-5-3-9z" fill="#c8632a"/><ellipse cx="12.500" cy="12.500" rx="4.300" ry="5.300" fill="#f2c6a6"/><path d="M8.200 10.500c.5-3 2-4.500 4.300-4.500s3.800 1.500 4.300 4.500c-1.300-1.600-2.700-2.200-4.300-2.200s-3 .6-4.300 2.200z" fill="#d2702f"/><path d="M10.300 14.800c1.300 1.200 3.100 1.200 4.400 0" fill="none" stroke="#fff" stroke-width="1"/><path d="M4 25c.5-3.500 3.500-5 8.500-5s8 1.500 8.500 5z" fill="#d23a36"/></g></svg></div><div class="nm" style="top:14.1px">Samantha Simpson</div></div>
<div class="tc" style="left:430px;top:422.2px">9 <i>h</i> 25 <i>m</i></div>
<div class="tc" style="left:517.5px;top:422.2px">9 <i>h</i> 33 <i>m</i></div>
<div class="tc" style="left:607.5px;top:422.2px">7 <i>h</i> 40 <i>m</i></div>
<div class="tc" style="left:696.5px;top:422.2px">9 <i>h</i> 20 <i>m</i></div>
<div class="tc" style="left:785.5px;top:422.2px">8 <i>h</i> 25 <i>m</i></div>
<div class="gr" style="top:451.1px">Departamento de marketing</div>
<div class="pr" style="top:477.5px"><div class="av"><svg viewBox="0 0 25 25" width="25" height="25"><defs><clipPath id="c3"><circle cx="12.500" cy="12.500" r="12.500"/></clipPath></defs><g clip-path="url(#c3)"><rect width="25" height="25" fill="#fff"/><path d="M4 12.500c0-2.500 2.500-4 8.500-4s8.500 1.500 8.500 4l1 9.500-4 1-.5 2H7.500L7 23l-4-1z" fill="#1f4f9e"/><path d="M10.800 8.500h3.400l-.5 7h-2.400z" fill="#eef2f8"/><path d="M12 9.500h1l.5 5-1 1.200-1-1.200z" fill="#12336f"/><circle cx="12.500" cy="5.300" r="3" fill="#e6bfa2"/><path d="M9.500 4.600c0-2.100 1.300-3.300 3-3.300s3 1.200 3 3.300c-.8-1-1.800-1.400-3-1.400s-2.200.4-3 1.400z" fill="#c9c9cc"/><path d="M8.500 19l-1.500 6h4.500l1-5 1 5H18l-1.500-6z" fill="#1a4389"/></g></svg></div><div class="nm" style="top:8.9px">Juan Manguera</div><div class="sb">Jefe de Ventas</div></div>
<div class="tc" style="left:430px;top:483.2px">6 <i>h</i> 55 <i>m</i></div>
<div class="tc" style="left:517.5px;top:483.2px">7 <i>h</i> 56 <i>m</i></div>
<svg class="abs" style="left:583.0px;top:483.5px" width="9" height="9" viewBox="0 0 9 9"><circle cx="4.500" cy="4.500" r="4.300" fill="#2fb4ee"/><path d="M2.600 4.600l1.400 1.400 2.500-2.800" stroke="#fff" stroke-width="1.100" fill="none"/></svg>
<div class="tc" style="left:607.5px;top:483.2px">8 <i>h</i> 25 <i>m</i></div>
<div class="tc" style="left:696.5px;top:483.2px">7 <i>h</i> 40 <i>m</i></div>
<svg class="abs" style="left:761.5px;top:483.5px" width="9" height="9" viewBox="0 0 9 9"><circle cx="4.500" cy="4.500" r="4.300" fill="#e5483f"/><path d="M4.500 2.200v2.800M4.500 6.200v.9" stroke="#fff" stroke-width="1.300"/></svg>
<div class="tc" style="left:785.5px;top:483.2px">6 <i>h</i> 55 <i>m</i></div>
<div class="gr" style="top:514.5px">Departamento de TI</div>
<div class="pr" style="top:540.9px"><div class="av"><svg viewBox="0 0 25 25" width="25" height="25"><defs><clipPath id="c4"><circle cx="12.500" cy="12.500" r="12.500"/></clipPath></defs><g clip-path="url(#c4)"><rect width="25" height="25" fill="#fff"/><g transform="translate(12.5 13) scale(1.22) translate(-12.5 -12)"><path d="M3 25c0-4 4-6 9.500-6s9.500 2 9.500 6z" fill="#f3f3f3"/><rect x="10" y="15" width="5" height="5" fill="#c99878"/><ellipse cx="12.500" cy="10.500" rx="5.300" ry="6.300" fill="#d9a988"/><path d="M7.200 9.500c-.3-4.500 2-7 5.300-7s5.600 2.500 5.300 7c-.8-2.300-2.300-3.500-5.300-3.500s-4.500 1.200-5.300 3.500z" fill="#2a1c14"/><path d="M7.400 11.500c.6 4.500 2.600 6.300 5.100 6.300s4.500-1.800 5.100-6.300c-1 2-2.600 2.600-5.100 2.600s-4.100-.6-5.100-2.600z" fill="#3a2a20"/></g></g></svg></div><div class="nm" style="top:8.9px">Andrés Moreno</div><div class="sb">Gerente</div></div>
<div class="tc" style="left:430px;top:547.2px">7 <i>h</i> 56 <i>m</i></div>
<div class="tc" style="left:517.5px;top:547.2px">7 <i>h</i> 40 <i>m</i></div>
<div class="tc f" style="left:607.5px;top:547.2px">6 <i>h</i> 40 <i>m</i></div>
<div class="tc" style="left:696.5px;top:547.2px">6 <i>h</i> 43 <i>m</i></div>
<div class="tc" style="left:785.5px;top:547.2px">7 <i>h</i> 56 <i>m</i></div>
<div class="gr" style="top:577.9px">Departamento de ventas</div>
<div class="pr" style="top:604.3px"><div class="av"><svg viewBox="0 0 25 25" width="25" height="25"><defs><clipPath id="c5"><circle cx="12.500" cy="12.500" r="12.500"/></clipPath></defs><g clip-path="url(#c5)"><rect width="25" height="25" fill="#fdfdfd"/><path d="M0 9c2-1 4 0 4.500 2.500S3 17 0 17z" fill="#9ccf7a"/><path d="M1 13c1.500 0 2.500 1.500 2.500 3.500" stroke="#6aaa4c" stroke-width="1.200" fill="none"/><g transform="translate(13.5 14) scale(1.25) translate(-14.3 -13)"><path d="M10.500 7c0-3 1.500-4.800 3.800-4.800S18 4 18 7c0 2.500.8 5.500 1.500 7.500h-10c.6-2 1-5 1-7.500z" fill="#3b2a22"/><path d="M7.500 25c0-6.500 2.500-10.500 6.800-10.500S21 18.500 21 25z" fill="#c9d3df"/><circle cx="14.300" cy="7.800" r="3" fill="#e4bb9e"/><path d="M9 19c3-1 7.500-1 10.500 0v1.800c-3 .8-7.500.8-10.500 0z" fill="#b9c5d3"/></g></g></svg></div><div class="nm" style="top:8.9px">Elena Sanchez</div><div class="sb">CEO</div></div>
<div class="tc" style="left:430px;top:609.7px">6 <i>h</i> 55 <i>m</i></div>
<div class="tc" style="left:517.5px;top:609.7px">9 <i>h</i> 10 <i>m</i></div>
<div class="tc" style="left:607.5px;top:609.7px"><i>7 h</i> 40 <i>m</i></div>
<div class="tc" style="left:696.5px;top:609.7px">6 <i>h</i> 30 <i>m</i></div>
<div class="tc" style="left:785.5px;top:609.7px">6 <i>h</i> 55 <i>m</i></div>
<div class="pr" style="top:641.3px"><div class="av"><svg viewBox="0 0 25 25" width="25" height="25"><defs><clipPath id="c6"><circle cx="12.500" cy="12.500" r="12.500"/></clipPath></defs><g clip-path="url(#c6)"><rect width="25" height="25" fill="#a9bccf"/><rect x="0" y="0" width="10" height="25" fill="#8ea4bb"/><path d="M5 25c0-7 3.500-11 9-11s9 4 9 11z" fill="#c4d9e8"/><circle cx="15" cy="8" r="3.800" fill="#e6c2a6"/><path d="M11.300 7c.2-3 1.700-4.400 3.700-4.400S18.500 4 18.700 7c-1-1.300-2.200-1.800-3.700-1.800s-2.700.5-3.700 1.800z" fill="#9a7a58"/><path d="M7 19c3.500-1.300 9-1.300 12.500 0v2.500c-3.500 1-9 1-12.500 0z" fill="#d9c0aa"/></g></svg></div><div class="nm" style="top:14.1px">Alejandro Martínez</div></div>
<div class="tc" style="left:430px;top:647.7px">9 <i>h</i> 10 <i>m</i></div>
<div class="tc" style="left:517.5px;top:647.7px">9 <i>h</i> 20 <i>m</i></div>
<div class="tc" style="left:607.5px;top:647.7px">6 <i>h</i> 30 <i>m</i></div>
<div class="tc" style="left:696.5px;top:647.7px">6 <i>h</i> 55 <i>m</i></div>
<div class="tc" style="left:785.5px;top:647.7px">9 <i>h</i> 10 <i>m</i></div>
<div class="pr" style="top:678.3px"><div class="av"><svg viewBox="0 0 25 25" width="25" height="25"><defs><clipPath id="c7"><circle cx="12.500" cy="12.500" r="12.500"/></clipPath></defs><g clip-path="url(#c7)"><rect width="25" height="25" fill="#eef1f3"/><rect x="0" y="11" width="7" height="7" fill="#4a93d6"/><rect x="0" y="6" width="5" height="4" fill="#d5dde4"/><path d="M5.500 25c0-6.500 3-10 8-10s8 3.500 8 10z" fill="#2b3440"/><path d="M12.200 15h2.600l-.6 6h-1.400z" fill="#f2f4f6"/><path d="M13 16h1l.3 4-.8 1-.8-1z" fill="#1d222b"/><circle cx="13.500" cy="9.500" r="3.900" fill="#dbae90"/><path d="M9.600 8.500c.2-3.200 1.800-4.700 3.900-4.700s3.700 1.500 3.900 4.700c-1-1.400-2.300-2-3.900-2s-2.900.6-3.900 2z" fill="#3a2a20"/><path d="M9.900 10.500c.5 3 1.900 4.200 3.600 4.200s3.100-1.200 3.600-4.200c-.8 1.300-2 1.800-3.600 1.800s-2.800-.5-3.600-1.800z" fill="#4a362a"/></g></svg></div><div class="nm" style="top:8.9px">Alex Fernandez</div><div class="sb">Gerente</div></div>
<div class="tc" style="left:430px;top:684.7px">9 <i>h</i> 20 <i>m</i></div>
<div class="tc" style="left:517.5px;top:684.7px">9 <i>h</i> 10 <i>m</i></div>
<div class="tc" style="left:607.5px;top:684.7px">7 <i>h</i> 55 <i>m</i></div>
<div class="tc" style="left:696.5px;top:684.7px">7 <i>h</i> 10 <i>m</i></div>
<div class="tc" style="left:785.5px;top:684.7px">9 <i>h</i> 20 <i>m</i></div>
<div class="pr" style="top:715.3px"><div class="av"><svg viewBox="0 0 25 25" width="25" height="25"><defs><clipPath id="c8"><circle cx="12.500" cy="12.500" r="12.500"/></clipPath></defs><g clip-path="url(#c8)"><rect width="25" height="25" fill="#7797c6"/><path d="M0 4h25M0 8h25M0 12h25M0 16h25" stroke="#93add4" stroke-width="1.300"/><path d="M9 25c0-6 2.500-9.500 6.500-9.500S22 19 22 25z" fill="#f2f4f9"/><path d="M12 9c0-3 1.500-4.700 3.700-4.700s3.700 1.700 3.700 4.700c0 2.500.6 5 1.200 7h-9.800c.6-2 1.200-4.500 1.200-7z" fill="#3a2a22"/><circle cx="15.700" cy="10" r="2.900" fill="#e3bd9f"/><circle cx="8" cy="19" r="4.500" fill="#f4f6fa"/></g></svg></div><div class="nm" style="top:14.1px">Ana Lima</div></div>
<div class="tc" style="left:430px;top:721.2px">9 <i>h</i> 20 <i>m</i></div>
<div class="tc" style="left:517.5px;top:721.2px">7 <i>h</i> 44 <i>m</i></div>
<svg class="abs" style="left:581.2px;top:721.5px" width="9" height="9" viewBox="0 0 9 9"><circle cx="4.500" cy="4.500" r="4.300" fill="#e5483f"/><path d="M4.500 2.200v2.800M4.500 6.200v.9" stroke="#fff" stroke-width="1.300"/></svg>
<div class="tc" style="left:607.5px;top:721.2px">9 <i>h</i> 33 <i>m</i></div>
<div class="tc" style="left:696.5px;top:721.2px">9 <i>h</i> 25 <i>m</i></div>
<div class="tc" style="left:785.5px;top:721.2px">9 <i>h</i> 20 <i>m</i></div>
<div class="pr" style="top:752.3px"><div class="av"><svg viewBox="0 0 25 25" width="25" height="25"><defs><clipPath id="c9"><circle cx="12.500" cy="12.500" r="12.500"/></clipPath></defs><g clip-path="url(#c9)"><rect width="25" height="25" fill="#f1efec"/><rect x="0" y="0" width="8" height="14" fill="#ddd9d3"/><path d="M9.500 9c0-3.200 1.600-5 4-5s4 1.800 4 5c0 3 .8 6 1.500 8H8c.7-2 1.500-5 1.500-8z" fill="#2e221c"/><path d="M6.500 25c0-6 3-9.500 7-9.500s7 3.500 7 9.500z" fill="#4f5b66"/><circle cx="13.500" cy="10" r="3.100" fill="#e2b79a"/><path d="M2 20.500h14l1 4.500H1z" fill="#fafafa"/><path d="M3 21.500h8" stroke="#c9cdd2" stroke-width=".8"/></g></svg></div><div class="nm" style="top:8.9px">Ana María Rubio</div><div class="sb">Directora</div></div>
<div class="tc" style="left:430px;top:759.2px">6 <i>h</i> 30 <i>m</i></div>
<div class="tc" style="left:517.5px;top:759.2px">8 <i>h</i> 15 <i>m</i></div>
<div class="tc" style="left:607.5px;top:759.2px">7 <i>h</i> 56 <i>m</i></div>
<div class="tc" style="left:696.5px;top:759.2px">9 <i>h</i> 20 <i>m</i></div>
<svg class="abs" style="left:760.2px;top:759.2px" width="9" height="9" viewBox="0 0 9 9"><circle cx="4.500" cy="4.500" r="4.300" fill="#e5483f"/><path d="M4.500 2.200v2.800M4.500 6.200v.9" stroke="#fff" stroke-width="1.300"/></svg>
<div class="tc" style="left:785.5px;top:759.2px">6 <i>h</i> 30 <i>m</i></div>
<div class="pr" style="top:789.3px"><div class="av"><svg viewBox="0 0 25 25" width="25" height="25"><defs><clipPath id="c10"><circle cx="12.500" cy="12.500" r="12.500"/></clipPath></defs><g clip-path="url(#c10)"><rect width="25" height="25" fill="#d2d2d4"/><path d="M7 12c0-5.500 2.300-8.500 5.500-8.500S18 6.500 18 12c0 3.500 1 6.500 2 8.500H5c1-2 2-5 2-8.500z" fill="#c99a62"/><ellipse cx="12.500" cy="12" rx="3.700" ry="4.700" fill="#ecc7aa"/><path d="M8.800 10.500c.4-3 1.700-4.300 3.700-4.300s3.300 1.300 3.700 4.300c-1.200-1.500-2.300-2-3.700-2s-2.500.5-3.700 2z" fill="#d4a76c"/><path d="M2.500 25c.5-4 3.500-6.500 10-6.500s9.500 2.500 10 6.500z" fill="#1b191b"/></g></svg></div><div class="nm" style="top:14.1px">Anna Bergmann</div></div>
<div class="tc" style="left:430px;top:799.2px">7 <i>h</i> 10 <i>m</i></div>
<svg class="abs" style="left:494.5px;top:798.5px" width="9" height="9" viewBox="0 0 9 9"><circle cx="4.500" cy="4.500" r="4.300" fill="#e5483f"/><path d="M4.500 2.200v2.800M4.500 6.200v.9" stroke="#fff" stroke-width="1.300"/></svg>
<div class="tc" style="left:517.5px;top:799.2px">9 <i>h</i> 20 <i>m</i></div>
<div class="tc" style="left:607.5px;top:799.2px">7 <i>h</i> 54 <i>m</i></div>
<div class="tc" style="left:696.5px;top:799.2px">8 <i>h</i> 25 <i>m</i></div>
<div class="tc" style="left:785.5px;top:799.2px">7 <i>h</i> 10 <i>m</i></div>
<svg class="abs" style="left:850.5px;top:798.5px" width="9" height="9" viewBox="0 0 9 9"><circle cx="4.500" cy="4.500" r="4.300" fill="#e5483f"/><path d="M4.500 2.200v2.800M4.500 6.200v.9" stroke="#fff" stroke-width="1.300"/></svg>
<div class="pr" style="top:826.3px"><div class="av"><svg viewBox="0 0 25 25" width="25" height="25"><defs><clipPath id="c11"><circle cx="12.500" cy="12.500" r="12.500"/></clipPath></defs><g clip-path="url(#c11)"><rect width="25" height="25" fill="#e6f0ec"/><rect x="3" y="4" width="3.500" height="12" fill="#c5dde6" opacity=".8"/><rect x="17" y="2" width="1.200" height="14" fill="#d3e2e2"/><path d="M4.500 25c0-6.500 3-10 8-10s8 3.500 8 10z" fill="#fcfdfd"/><path d="M11.700 15h1.800l.5 6.500h-2.800z" fill="#9cc3e3"/><path d="M12.200 15.800h.9l.3 4-0.750.9-.75-.9z" fill="#3f6fb0"/><circle cx="12.600" cy="9.300" r="3.700" fill="#e6c1a4"/><path d="M8.900 8.300c.2-3 1.700-4.400 3.700-4.400s3.500 1.400 3.700 4.400c-1-1.300-2.200-1.800-3.700-1.800s-2.700.5-3.700 1.800z" fill="#8a6a52"/><circle cx="20.500" cy="19.500" r="2.600" fill="#a9d25a"/><path d="M2 21h21" stroke="#dfe8e6" stroke-width="1"/></g></svg></div><div class="nm" style="top:8.9px">Ivan Rodriguez</div><div class="sb">Director, Gerente</div></div>
<div class="tc" style="left:430px;top:837.2px">7 <i>h</i> 40 <i>m</i></div>
<svg class="abs" style="left:494.5px;top:837.5px" width="9" height="9" viewBox="0 0 9 9"><circle cx="4.500" cy="4.500" r="4.300" fill="#2fb4ee"/><path d="M2.600 4.600l1.400 1.400 2.500-2.800" stroke="#fff" stroke-width="1.100" fill="none"/></svg>
<div class="tc" style="left:517.5px;top:837.2px">8 <i>h</i> 00 <i>m</i></div>
<svg class="abs" style="left:584.5px;top:835.1px" width="9" height="9" viewBox="0 0 9 9"><circle cx="4.500" cy="4.500" r="4.300" fill="#2fb4ee"/><path d="M2.600 4.600l1.400 1.400 2.500-2.800" stroke="#fff" stroke-width="1.100" fill="none"/></svg>
<div class="tc" style="left:607.5px;top:837.2px">9 <i>h</i> 22 <i>m</i></div>
<div class="tc" style="left:696.5px;top:837.2px">9 <i>h</i> 22 <i>m</i></div>
<div class="tc" style="left:785.5px;top:837.2px">7 <i>h</i> 40 <i>m</i></div>
<svg class="abs" style="left:850.5px;top:837.5px" width="9" height="9" viewBox="0 0 9 9"><circle cx="4.500" cy="4.500" r="4.300" fill="#2fb4ee"/><path d="M2.600 4.600l1.400 1.400 2.500-2.800" stroke="#fff" stroke-width="1.100" fill="none"/></svg>
<div class="abs" style="left:240px;top:522px;width:38px;height:74px;overflow:hidden"><div style="position:absolute;left:-37px;top:0;width:74px;height:74px;border-radius:50%;background:rgba(160,165,170,.45)"></div><svg style="position:absolute;left:7px;top:26px" width="13" height="22" viewBox="0 0 13 22"><path d="M10.500 2 3 11l7.500 9" fill="none" stroke="#fff" stroke-width="2.200" stroke-linecap="round" stroke-linejoin="round"/></svg></div>
<div class="abs" style="left:45px;top:864px;width:1205px;height:2px;background:#1f5fae"></div>
</div>
<div id="ph">
<div class="abs" style="left:20.6px;top:13.6px;font-size:13px;font-weight:bold;color:#1a1a1a;line-height:14px;letter-spacing:-.2px">11:34</div>
<svg class="abs" style="left:244.6px;top:15.4px" width="60" height="12" viewBox="0 0 60 12"><g fill="#1a1a1a"><rect x="0" y="6.500" width="2.600" height="2.600" rx=".7"/><rect x="0" y="3" width="2.600" height="2.600" rx=".7"/><rect x="3.600" y="6.500" width="2.600" height="2.600" rx=".7"/><rect x="3.600" y="3" width="2.600" height="2.600" rx=".7"/><rect x="7.200" y="6.500" width="2.600" height="2.600" rx=".7"/><rect x="7.200" y="3" width="2.600" height="2.600" rx=".7"/><rect x="10.800" y="6.500" width="2.600" height="2.600" rx=".7" opacity=".3"/><rect x="10.800" y="3" width="2.600" height="2.600" rx=".7" opacity=".3"/><rect x="10.800" y="0" width="2.600" height="2.600" rx=".7" opacity=".3"/></g><path d="M19.500 4.300a7.500 7.500 0 0 1 11 0M21.500 6.400a4.800 4.800 0 0 1 7 0" fill="none" stroke="#1a1a1a" stroke-width="1.700" stroke-linecap="round"/><circle cx="25" cy="8.600" r="1.300" fill="#1a1a1a"/><rect x="36.500" y="1.500" width="19" height="8.500" rx="2.300" fill="none" stroke="#1a1a1a" stroke-width=".9" opacity=".4"/><rect x="37.800" y="2.800" width="11.500" height="5.900" rx="1.300" fill="#1a1a1a"/><path d="M56.700 4.300v3a1.500 1.500 0 0 0 0-3z" fill="#1a1a1a" opacity=".45"/></svg>
<svg class="abs" style="left:9.6px;top:51.9px" width="13" height="10" viewBox="0 0 13 10"><path d="M5 1L1 5l4 4M1 5h11.500" fill="none" stroke="#b3b8bd" stroke-width="1.200"/></svg>
<div class="abs" style="left:32.6px;top:48.8px;font-size:16.700px;color:#3a3f44;line-height:18px;white-space:nowrap;letter-spacing:.1px;-webkit-text-stroke:.25px #3a3f44">Flujos de trabajo</div>
<svg class="abs" style="left:238.1px;top:48.6px" width="18" height="16" viewBox="0 0 18 16"><path d="M6 5a4.800 4.800 0 1 1 7.300 5.200" fill="none" stroke="#b9bec3" stroke-width="1.300"/><path d="M13.300 10l3 3.500" stroke="#b9bec3" stroke-width="1.400"/><path d="M2.500 8h7.500M2 10.500h8.500M1.500 13h9" stroke="#c3c8cd" stroke-width="1.400"/></svg>
<svg class="abs" style="left:278.6px;top:54.1px" width="19" height="6" viewBox="0 0 19 6"><g fill="none" stroke="#b9bec3" stroke-width="1.100"><circle cx="3" cy="3" r="2"/><circle cx="9.500" cy="3" r="2"/><circle cx="16" cy="3" r="2"/></g></svg>
<div class="band" style="top:75.6px;height:9.700px;background:linear-gradient(180deg,#f8fafc 0,#eaf0f5 35%,#eaf0f5 100%)"></div>
<div class="ttl" style="top:99.7px">Aprobar viaje de negocios para</div>
<div class="ttl" style="top:116.9px">(juanrodrigez@gmal.com) Juan</div>
<div class="chk" style="top:102.0px"></div>
<div class="cap" style="top:145.6px;font-size:10.400px;letter-spacing:.1px">VIAJE DE NEGOCIOS</div>
<div class="rb" style="top:142.4px">1</div>
<div class="cap" style="top:165.6px;font-size:10.600px">Hoy 11:33 am</div>
<div class="pbox" style="top:194.1px"></div>
<svg class="abs" style="left:238.1px;top:194.1px" width="14" height="82" viewBox="0 0 14 82"><path d="M1 .5l11.500 40.500L1 81.500" fill="none" stroke="#edf0f2" stroke-width="1"/></svg>
<div class="abs" style="left:54.6px;top:235.6px;width:150px;height:1px;background:#e6e9ec"></div>
<div class="sm" style="left:42.2px;top:205.2px">De</div>
<svg class="abs" style="left:30.1px;top:223.4px" width="25" height="25" viewBox="0 0 25 25"><circle cx="12.500" cy="12.500" r="12.500" fill="#dcebef"/><path d="M3.500 25c0-6.500 3.500-10 9-10s9 3.500 9 10z" fill="#fbfcfd"/><path d="M11.600 15h1.800l.4 7h-2.600z" fill="#8fb7dc"/><circle cx="12.500" cy="9" r="4.400" fill="#e3bc9f"/><path d="M8.100 8.200c0-3.200 2-4.800 4.400-4.800s4.400 1.600 4.400 4.800c-1-1.500-2.600-2.100-4.400-2.100s-3.400.6-4.400 2.100z" fill="#8a6a52"/><circle cx="20" cy="17.500" r="2.600" fill="#b5d66a" opacity=".85"/><rect x="3" y="9" width="3" height="9" fill="#bcd8e6" opacity=".7"/><circle cx="12.500" cy="12.500" r="12" fill="none" stroke="#d5e4ee" stroke-width="1"/></svg>
<div class="sm" style="left:42.6px;top:255.1px">38 segundos</div>
<div class="sm" style="left:132.9px;top:205.2px">En progreso</div>
<svg class="abs" style="left:117.1px;top:222.9px" width="26" height="26" viewBox="0 0 25 25"><path d="M7.200 8.500c0-4.200 2.300-6.300 5.300-6.300s5.300 2.100 5.300 6.300c0 3 .9 6.500 2 9H5.200c1.100-2.500 2-6 2-9z" fill="#3a2218"/><path d="M5 25c0-5.500 3-9 7.500-9S20 19.500 20 25z" fill="#8990a4"/><circle cx="12.500" cy="9.800" r="3.900" fill="#deb092"/><path d="M8.600 8.800c.3-3.100 1.800-4.500 3.900-4.500s3.600 1.400 3.900 4.500c-1-1.300-2.300-1.900-3.900-1.900s-2.900.6-3.900 1.900z" fill="#3a2218"/><rect x="1.500" y="12.500" width="3.500" height="5.500" fill="#a5cf5a" opacity=".85"/></svg>
<svg class="abs" style="left:135.5px;top:219.3px" width="13.500" height="13.500" viewBox="0 0 13 13"><circle cx="6.500" cy="6.500" r="6.500" fill="#1a9fe8"/><path d="M6.500 3.300v3.500h2.600" fill="none" stroke="#fff" stroke-width="1.200"/></svg>
<div class="sm" style="left:132.9px;top:255.1px">1 segundo</div>
<div class="abs" style="left:195.3px;top:207.6px;width:35px;height:5px;border-radius:3px;background:#eceef0"></div>
<div class="abs" style="left:198.8px;top:220.8px;width:28px;height:28px;border-radius:50%;background:#e9ebed"></div>
<div class="abs" style="left:200.0px;top:257.1px;width:26px;height:5px;border-radius:3px;background:#eceef0"></div>
<div class="sm" style="left:276.9px;top:205.2px">En progreso</div>
<svg class="abs" style="left:267.9px;top:225.8px" width="18" height="18" viewBox="0 0 18 18"><circle cx="9" cy="9" r="7.800" fill="none" stroke="#dfe2e5" stroke-width="1.200"/><path d="M9 4.800V9.500h3.800" fill="none" stroke="#dfe2e5" stroke-width="1.200"/></svg>
<div class="sm" style="left:276.9px;top:255.1px;color:#4a8ccc;font-size:9.600px;-webkit-text-stroke:.2px #4a8ccc">Registro</div>
<div class="btn" style="left:14.0px;top:297.3px;width:136.500px;border:1.500px solid #b2da4e;color:#8dc21f"></div>
<svg class="abs" style="left:51.6px;top:307.8px" width="14" height="11" viewBox="0 0 14 11"><path d="M1.500 5.500l3.600 3.800L12.500 1.500" fill="none" stroke="#8dc21f" stroke-width="2.300"/></svg>
<div class="abs" style="left:70.6px;top:305.5px;font-size:13px;font-weight:bold;color:#8dc21f;line-height:16px;white-space:nowrap">Aprobar</div>
<div class="btn" style="left:160.2px;top:297.3px;width:136.500px;border:1.500px solid #dcdfe2"></div>
<svg class="abs" style="left:194.6px;top:307.4px" width="12" height="12" viewBox="0 0 12 12"><path d="M1.200 1.200l9.600 9.600M10.800 1.200l-9.600 9.600" fill="none" stroke="#3a4046" stroke-width="2.400"/></svg>
<div class="abs" style="left:211.1px;top:305.5px;font-size:13px;font-weight:bold;color:#3a4046;line-height:16px;white-space:nowrap">Rechazar</div>
<div class="band" style="top:345.6px;height:11px"></div>
<div class="ttl" style="top:372.9px">Aprobar la licencia</div>
<div class="ttl" style="top:390.1px">(juanrodrigez@gmal.com) Juan</div>
<div class="chk" style="top:373.3px"></div>
<div class="cap" style="top:418.3px;font-size:10.400px;letter-spacing:.1px">APROBAR LA LICENCIA</div>
<div class="rb" style="top:413.5px">1</div>
<div class="cap" style="top:436.8px;font-size:10.600px">Hoy 11:31 am</div>
<div class="pbox" style="top:464.4px"></div>
<svg class="abs" style="left:238.1px;top:464.4px" width="14" height="82" viewBox="0 0 14 82"><path d="M1 .5l11.500 40.500L1 81.500" fill="none" stroke="#edf0f2" stroke-width="1"/></svg>
<div class="abs" style="left:54.6px;top:505.9px;width:150px;height:1px;background:#e6e9ec"></div>
<div class="sm" style="left:42.2px;top:475.5px">De</div>
<svg class="abs" style="left:30.1px;top:493.7px" width="25" height="25" viewBox="0 0 25 25"><circle cx="12.500" cy="12.500" r="12.500" fill="#dcebef"/><path d="M3.500 25c0-6.500 3.500-10 9-10s9 3.500 9 10z" fill="#fbfcfd"/><path d="M11.600 15h1.800l.4 7h-2.600z" fill="#8fb7dc"/><circle cx="12.500" cy="9" r="4.400" fill="#e3bc9f"/><path d="M8.100 8.200c0-3.200 2-4.800 4.400-4.800s4.400 1.600 4.400 4.800c-1-1.500-2.600-2.100-4.400-2.100s-3.400.6-4.400 2.100z" fill="#8a6a52"/><circle cx="20" cy="17.500" r="2.600" fill="#b5d66a" opacity=".85"/><rect x="3" y="9" width="3" height="9" fill="#bcd8e6" opacity=".7"/><circle cx="12.500" cy="12.500" r="12" fill="none" stroke="#d5e4ee" stroke-width="1"/></svg>
<div class="sm" style="left:42.6px;top:525.4px">12 segundos</div>
<div class="sm" style="left:132.9px;top:475.5px">En progreso</div>
<svg class="abs" style="left:117.1px;top:493.2px" width="26" height="26" viewBox="0 0 25 25"><path d="M7.200 8.500c0-4.200 2.300-6.300 5.300-6.300s5.300 2.100 5.300 6.300c0 3 .9 6.500 2 9H5.200c1.100-2.500 2-6 2-9z" fill="#3a2218"/><path d="M5 25c0-5.500 3-9 7.500-9S20 19.500 20 25z" fill="#8990a4"/><circle cx="12.500" cy="9.800" r="3.900" fill="#deb092"/><path d="M8.600 8.800c.3-3.100 1.800-4.500 3.900-4.500s3.600 1.400 3.900 4.500c-1-1.300-2.300-1.900-3.900-1.900s-2.900.6-3.900 1.900z" fill="#3a2218"/><rect x="1.500" y="12.500" width="3.500" height="5.500" fill="#a5cf5a" opacity=".85"/></svg>
<svg class="abs" style="left:135.5px;top:489.6px" width="13.500" height="13.500" viewBox="0 0 13 13"><circle cx="6.500" cy="6.500" r="6.500" fill="#1a9fe8"/><path d="M6.500 3.300v3.500h2.600" fill="none" stroke="#fff" stroke-width="1.200"/></svg>
<div class="sm" style="left:132.9px;top:525.4px">29 segundos</div>
<div class="abs" style="left:195.3px;top:477.9px;width:35px;height:5px;border-radius:3px;background:#eceef0"></div>
<div class="abs" style="left:198.8px;top:491.1px;width:28px;height:28px;border-radius:50%;background:#e9ebed"></div>
<div class="abs" style="left:200.0px;top:527.4px;width:26px;height:5px;border-radius:3px;background:#eceef0"></div>
<div class="sm" style="left:276.9px;top:475.5px">En progreso</div>
<svg class="abs" style="left:267.9px;top:496.1px" width="18" height="18" viewBox="0 0 18 18"><circle cx="9" cy="9" r="7.800" fill="none" stroke="#dfe2e5" stroke-width="1.200"/><path d="M9 4.800V9.500h3.800" fill="none" stroke="#dfe2e5" stroke-width="1.200"/></svg>
<div class="sm" style="left:276.9px;top:525.4px;color:#4a8ccc;font-size:9.600px;-webkit-text-stroke:.2px #4a8ccc">Registro</div>
<div class="btn" style="left:14.0px;top:567.6px;width:136.500px;border:1.500px solid #b2da4e;color:#8dc21f"></div>
<svg class="abs" style="left:51.6px;top:578.1px" width="14" height="11" viewBox="0 0 14 11"><path d="M1.500 5.500l3.600 3.800L12.500 1.500" fill="none" stroke="#8dc21f" stroke-width="2.300"/></svg>
<div class="abs" style="left:70.6px;top:575.8px;font-size:13px;font-weight:bold;color:#8dc21f;line-height:16px;white-space:nowrap">Aprobar</div>
<div class="btn" style="left:160.2px;top:567.6px;width:136.500px;border:1.500px solid #dcdfe2"></div>
<svg class="abs" style="left:194.6px;top:577.7px" width="12" height="12" viewBox="0 0 12 12"><path d="M1.200 1.200l9.600 9.600M10.800 1.200l-9.600 9.600" fill="none" stroke="#3a4046" stroke-width="2.400"/></svg>
<div class="abs" style="left:211.1px;top:575.8px;font-size:13px;font-weight:bold;color:#3a4046;line-height:16px;white-space:nowrap">Rechazar</div>
<div class="abs" style="left:250.1px;top:561.0px;width:47.500px;height:47.500px;border-radius:10.500px;background:#c8c8c8"></div>
<svg class="abs" style="left:258.6px;top:569.6px" width="31" height="31" viewBox="0 0 31 31"><path d="M15.500 1v29M1 15.500h29" stroke="#fff" stroke-width="1.500"/></svg>
<div class="band" style="top:616.4px;height:8px"></div>
<div class="abs" style="left:0;top:624.4px;width:311px;height:80px;background:#fff"></div>
<svg class="abs" style="left:23.6px;top:634.1px" width="20" height="20" viewBox="0 0 20 20"><path d="M3.500 2.500h13a1.500 1.500 0 0 1 1.500 1.500v8.500a1.500 1.500 0 0 1-1.500 1.500H9l-4 3.500v-3.500H3.500A1.500 1.500 0 0 1 2 12.500V4a1.500 1.500 0 0 1 1.500-1.500z" fill="none" stroke="#b9bec3" stroke-width="1.200"/><path d="M5.500 6.500h9M5.500 9.500h6" stroke="#b9bec3" stroke-width="1.200"/></svg>
<svg class="abs" style="left:104.6px;top:633.1px" width="20" height="20" viewBox="0 0 20 20"><rect x="2.500" y="2.500" width="12.500" height="15" rx="1.800" fill="none" stroke="#b9bec3" stroke-width="1.200"/><path d="M15 6h1.500a1 1 0 0 1 1 1v9a1.500 1.500 0 0 1-1.500 1.500" fill="none" stroke="#b9bec3" stroke-width="1.200"/><rect x="5" y="5.500" width="2.500" height="2.500" fill="#b9bec3"/><path d="M9 6.800h4M5 10.500h8M5 13.500h8" stroke="#b9bec3" stroke-width="1.100"/></svg>
<svg class="abs" style="left:186.1px;top:633.1px" width="20" height="20" viewBox="0 0 20 20"><circle cx="10" cy="10" r="8.300" fill="none" stroke="#b9bec3" stroke-width="1.200"/><path d="M6.300 10.200l2.700 2.700 5-5.500" fill="none" stroke="#b9bec3" stroke-width="1.300"/></svg>
<svg class="abs" style="left:267.9px;top:634.1px" width="18" height="18" viewBox="0 0 18 18"><g fill="none" stroke="#26292c" stroke-width="1.500"><rect x="1.500" y="1.500" width="6" height="6" rx="1.800"/><rect x="10.500" y="1.500" width="6" height="6" rx="1.800"/><rect x="1.500" y="10.500" width="6" height="6" rx="1.800"/><rect x="10.500" y="10.500" width="6" height="6" rx="1.800"/></g></svg>
<div class="tab" style="left:33.5px;top:658.8px;color:#b7bcc1">Messenger</div>
<div class="tab" style="left:114.8px;top:658.8px;color:#b7bcc1">Feed</div>
<div class="tab" style="left:196.2px;top:658.8px;color:#b7bcc1">Tareas</div>
<div class="tab" style="left:276.9px;top:658.8px;color:#26292c">Menú</div>
<div class="tb" style="left:42.85px;top:626.85px;width:14.5px">1</div>
<div class="tb" style="left:123.95px;top:626.85px;width:14.5px">2</div>
<div class="tb" style="left:286.35px;top:626.85px;width:21.5px">45</div>
<div class="abs" style="left:97.9px;top:691.0px;width:115.500px;height:5px;border-radius:3px;background:#0a0a0a"></div>
</div>
</body>
</html>
